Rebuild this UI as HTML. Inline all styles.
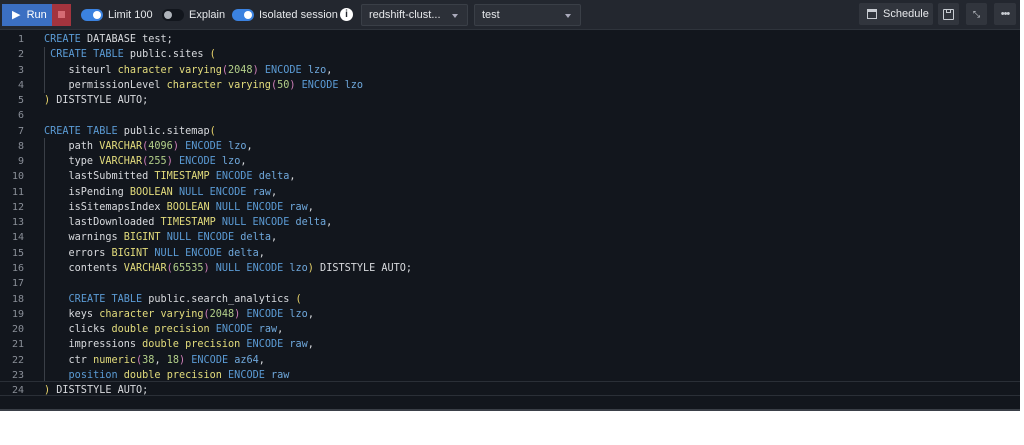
<!DOCTYPE html>
<html><head><meta charset="utf-8"><style>
*{margin:0;padding:0;box-sizing:border-box}
body{width:1024px;height:445px;background:#fff;font-family:"Liberation Sans",sans-serif;position:relative;overflow:hidden}
#tb{position:absolute;left:0;top:0;width:1020px;height:30px;background:#23272f;border-bottom:1px solid #2f343c}
#ed{position:absolute;left:0;top:30px;width:1020px;height:381px;background:#12161d;border-bottom:2px solid #3a3f47}
.abs{position:absolute}
.run{left:2px;top:4px;width:50px;height:22px;background:#3b6fc2;color:#fff;font-size:11px;line-height:22px;padding-left:10px}
.stop{left:52px;top:4px;width:19px;height:22px;background:#a3343e}
.stop i{position:absolute;left:6px;top:7px;width:7px;height:7px;background:#d56b74}
.tg{width:22px;height:12px;border-radius:6px;top:9px}
.tg.on{background:#3b82e0}.tg.off{background:#12161d}
.tg b{position:absolute;top:2px;width:8px;height:8px;border-radius:50%;background:#fff}
.lbl{color:#e6e8eb;font-size:11px;top:9px}
.sel{top:4px;height:22px;background:#2c3038;border:1px solid #3a3f47;border-radius:2px;color:#e6e8eb;font-size:11px;line-height:20px;padding-left:7px}
.sel i{position:absolute;right:9px;top:9px;border-left:3px solid transparent;border-right:3px solid transparent;border-top:4px solid #aab}
.btn{top:3px;height:22px;background:#31353d;border-radius:2px;color:#e6e8eb;font-size:11px;line-height:22px}
#code{position:absolute;left:0;top:2px;font-family:"DejaVu Sans Mono","Liberation Mono",monospace;font-size:10.2px;line-height:15.26px;color:#d8dade;white-space:pre}
.ln{position:absolute;left:0;width:24px;text-align:right;color:#8a8f98;font-family:"DejaVu Sans Mono",monospace;font-size:10px;line-height:15.26px}
.k{color:#5b9bd5}.t{color:#e3dc7c}.n{color:#b3d08a}.p{color:#cf7fb8}.y{color:#e8d36a}.v{color:#6fa8dc}
</style></head><body>
<div id="tb">
<div class="abs run">▶&nbsp; Run</div>
<div class="abs stop"><i></i></div>
<div class="abs tg on" style="left:81px"><b style="left:12px"></b></div>
<div class="abs lbl" style="left:108px">Limit 100</div>
<div class="abs tg off" style="left:162px"><b style="left:2px;background:#aeb3ba"></b></div>
<div class="abs lbl" style="left:189px">Explain</div>
<div class="abs tg on" style="left:232px"><b style="left:12px"></b></div>
<div class="abs lbl" style="left:259px">Isolated session</div>
<div class="abs" style="left:340px;top:8px;width:13px;height:13px;border-radius:50%;background:#fff;color:#23272f;font-size:10px;font-weight:bold;text-align:center;line-height:13px">i</div>
<div class="abs sel" style="left:361px;width:107px">redshift-clust...<i></i></div>
<div class="abs sel" style="left:474px;width:107px">test<i></i></div>
<div class="abs btn" style="left:859px;width:74px;padding-left:24px">Schedule<span class="abs" style="left:8px;top:6px;width:10px;height:10px;border:1px solid #c8ccd2;border-top-width:3px"></span></div>
<div class="abs btn" style="left:938px;width:21px"><span class="abs" style="left:5px;top:6px;width:11px;height:11px;border:1.5px solid #c8ccd2;border-radius:1px"></span><span class="abs" style="left:8px;top:6px;width:5px;height:4px;border:1px solid #c8ccd2;border-top:0"></span></div>
<div class="abs btn" style="left:966px;width:21px;text-align:center;font-size:9px;color:#c8ccd2">⤡</div>
<div class="abs btn" style="left:994px;width:22px;text-align:center;letter-spacing:-1px;color:#c8ccd2">•••</div>
</div>
<div id="ed">
<div class="abs" style="left:0;top:351px;width:1020px;height:15px;border-top:1px solid #2a2f37;border-bottom:1px solid #2a2f37"></div>
<div class="abs" style="left:44px;top:108px;width:1px;height:139px;background:#3a3f47"></div>
<div class="abs" style="left:44px;top:245px;width:1px;height:106px;background:#3a3f47"></div>
<div class="abs" style="left:44px;top:17px;width:1px;height:46px;background:#3a3f47"></div>
<div class="ln" style="top:2px">1<br>2<br>3<br>4<br>5<br>6<br>7<br>8<br>9<br>10<br>11<br>12<br>13<br>14<br>15<br>16<br>17<br>18<br>19<br>20<br>21<br>22<br>23<br>24</div>
<div id="code" style="left:44px"><span class="k">CREATE</span> DATABASE test;
 <span class="k">CREATE TABLE</span> public.sites <span class="y">(</span>
    siteurl <span class="t">character varying</span><span class="p">(</span><span class="n">2048</span><span class="p">)</span> <span class="k">ENCODE</span> <span class="v">lzo</span>,
    permissionLevel <span class="t">character varying</span><span class="p">(</span><span class="n">50</span><span class="p">)</span> <span class="k">ENCODE</span> <span class="v">lzo</span>
<span class="y">)</span> DISTSTYLE AUTO;

<span class="k">CREATE TABLE</span> public.sitemap<span class="y">(</span>
    path <span class="t">VARCHAR</span><span class="p">(</span><span class="n">4096</span><span class="p">)</span> <span class="k">ENCODE</span> <span class="v">lzo</span>,
    type <span class="t">VARCHAR</span><span class="p">(</span><span class="n">255</span><span class="p">)</span> <span class="k">ENCODE</span> <span class="v">lzo</span>,
    lastSubmitted <span class="t">TIMESTAMP</span> <span class="k">ENCODE</span> <span class="v">delta</span>,
    isPending <span class="t">BOOLEAN</span> <span class="k">NULL ENCODE</span> <span class="v">raw</span>,
    isSitemapsIndex <span class="t">BOOLEAN</span> <span class="k">NULL ENCODE</span> <span class="v">raw</span>,
    lastDownloaded <span class="t">TIMESTAMP</span> <span class="k">NULL ENCODE</span> <span class="v">delta</span>,
    warnings <span class="t">BIGINT</span> <span class="k">NULL ENCODE</span> <span class="v">delta</span>,
    errors <span class="t">BIGINT</span> <span class="k">NULL ENCODE</span> <span class="v">delta</span>,
    contents <span class="t">VARCHAR</span><span class="p">(</span><span class="n">65535</span><span class="p">)</span> <span class="k">NULL ENCODE</span> <span class="v">lzo</span><span class="y">)</span> DISTSTYLE AUTO;

    <span class="k">CREATE TABLE</span> public.search_analytics <span class="y">(</span>
    keys <span class="t">character varying</span><span class="p">(</span><span class="n">2048</span><span class="p">)</span> <span class="k">ENCODE</span> <span class="v">lzo</span>,
    clicks <span class="t">double precision</span> <span class="k">ENCODE</span> <span class="v">raw</span>,
    impressions <span class="t">double precision</span> <span class="k">ENCODE</span> <span class="v">raw</span>,
    ctr <span class="t">numeric</span><span class="p">(</span><span class="n">38</span>, <span class="n">18</span><span class="p">)</span> <span class="k">ENCODE</span> <span class="v">az64</span>,
    <span class="k">position</span> <span class="t">double precision</span> <span class="k">ENCODE</span> <span class="v">raw</span>
<span class="y">)</span> DISTSTYLE AUTO;</div>
</div>
</body></html>
